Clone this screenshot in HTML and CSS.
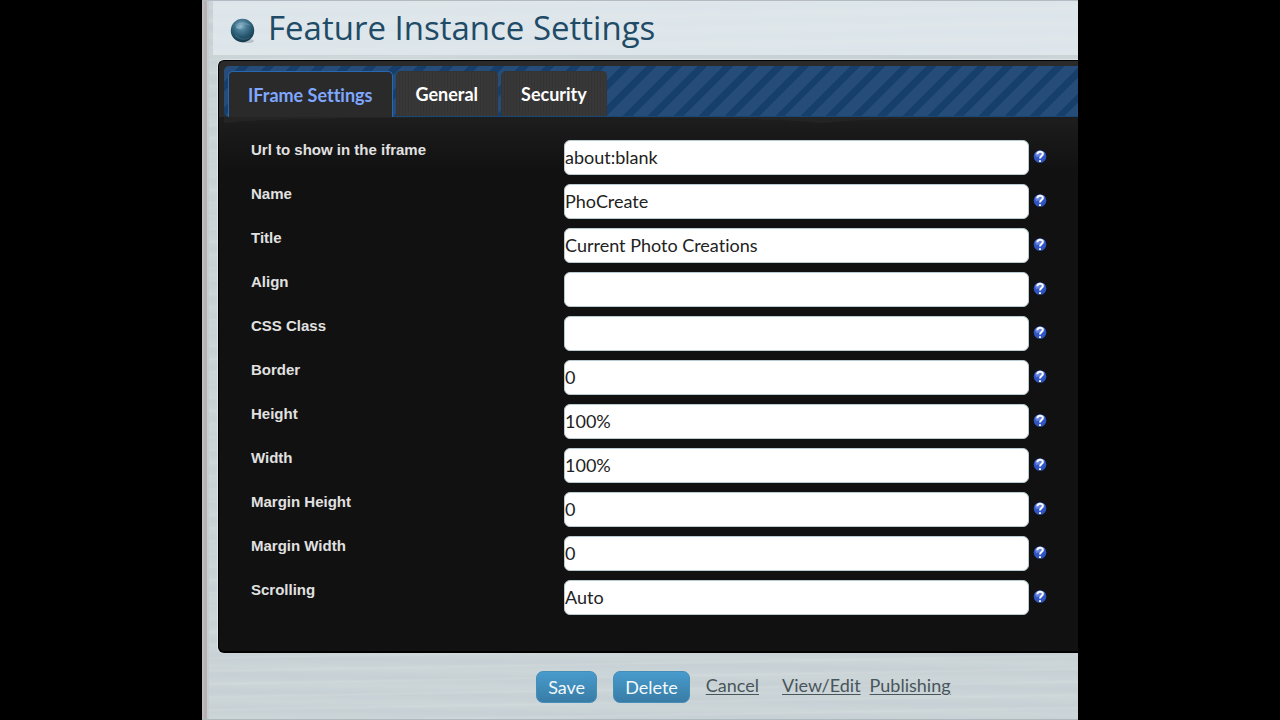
FILE: index.html
```html
<!DOCTYPE html>
<html lang="en">
<head>
<meta charset="utf-8">
<meta name="viewport" content="width=device-width, initial-scale=1">
<title>Feature Instance Settings</title>
<link rel="stylesheet" href="styles.css">
</head>
<body>
<main class="page">
  <header class="heading">
    <svg class="orb" viewBox="0 0 26 26" aria-hidden="true">
      <defs><radialGradient id="orb" cx=".45" cy=".3" r=".7"><stop offset="0" stop-color="#8ab5c9"/><stop offset=".3" stop-color="#4c7e99"/><stop offset=".65" stop-color="#285970"/><stop offset="1" stop-color="#10364b"/></radialGradient></defs>
      <ellipse cx="17" cy="23" rx="7" ry="2" fill="#b9c0c5"/>
      <circle cx="12.500" cy="12.500" r="11.700" fill="url(#orb)"/>
      <path d="M4 8C8 3 17 3 21 8C16 6 9 6 4 8Z" fill="#8eb4c7" opacity=".35"/>
      <ellipse cx="9" cy="9" rx="3" ry="2" fill="#9cc2d2" opacity=".5"/>
      <path d="M5 17C8 21 15 23 20 19" fill="none" stroke="#5c8ca5" stroke-width="1.500" opacity=".3"/>
    </svg>
    <h1 class="title">Feature Instance Settings</h1>
  </header>
  <form class="content">
    <section class="panel">
      <div class="tabs" role="tablist">
        <button class="tab tab-active" type="button" role="tab" aria-selected="true">IFrame Settings</button>
        <button class="tab" type="button" role="tab" aria-selected="false">General</button>
        <button class="tab" type="button" role="tab" aria-selected="false">Security</button>
      </div>
      <div class="fields" role="tabpanel">
        <div class="row"><label class="label" for="url">Url to show in the iframe</label><input class="input" id="url" type="text" value="about:blank"><a class="help" href="#url" aria-label="Help"><svg class="help-icon" viewBox="0 0 14 15"><use href="#q"/></svg></a></div>
        <div class="row"><label class="label" for="name">Name</label><input class="input" id="name" type="text" value="PhoCreate"><a class="help" href="#name" aria-label="Help"><svg class="help-icon" viewBox="0 0 14 15"><use href="#q"/></svg></a></div>
        <div class="row"><label class="label" for="title">Title</label><input class="input" id="title" type="text" value="Current Photo Creations"><a class="help" href="#title" aria-label="Help"><svg class="help-icon" viewBox="0 0 14 15"><use href="#q"/></svg></a></div>
        <div class="row"><label class="label" for="align">Align</label><input class="input" id="align" type="text"><a class="help" href="#align" aria-label="Help"><svg class="help-icon" viewBox="0 0 14 15"><use href="#q"/></svg></a></div>
        <div class="row"><label class="label" for="css">CSS Class</label><input class="input" id="css" type="text"><a class="help" href="#css" aria-label="Help"><svg class="help-icon" viewBox="0 0 14 15"><use href="#q"/></svg></a></div>
        <div class="row"><label class="label" for="border">Border</label><input class="input" id="border" type="text" value="0"><a class="help" href="#border" aria-label="Help"><svg class="help-icon" viewBox="0 0 14 15"><use href="#q"/></svg></a></div>
        <div class="row"><label class="label" for="height">Height</label><input class="input" id="height" type="text" value="100%"><a class="help" href="#height" aria-label="Help"><svg class="help-icon" viewBox="0 0 14 15"><use href="#q"/></svg></a></div>
        <div class="row"><label class="label" for="width">Width</label><input class="input" id="width" type="text" value="100%"><a class="help" href="#width" aria-label="Help"><svg class="help-icon" viewBox="0 0 14 15"><use href="#q"/></svg></a></div>
        <div class="row"><label class="label" for="mheight">Margin Height</label><input class="input" id="mheight" type="text" value="0"><a class="help" href="#mheight" aria-label="Help"><svg class="help-icon" viewBox="0 0 14 15"><use href="#q"/></svg></a></div>
        <div class="row"><label class="label" for="mwidth">Margin Width</label><input class="input" id="mwidth" type="text" value="0"><a class="help" href="#mwidth" aria-label="Help"><svg class="help-icon" viewBox="0 0 14 15"><use href="#q"/></svg></a></div>
        <div class="row"><label class="label" for="scrolling">Scrolling</label><input class="input" id="scrolling" type="text" value="Auto"><a class="help" href="#scrolling" aria-label="Help"><svg class="help-icon" viewBox="0 0 14 15"><use href="#q"/></svg></a></div>
      </div>
    </section>
    <div class="actions">
      <button class="button" type="button">Save</button>
      <button class="button" type="button">Delete</button>
      <nav class="links">
        <a class="link link-cancel" href="#cancel">Cancel</a>
        <a class="link" href="#view">View/Edit</a>
        <a class="link" href="#publishing">Publishing</a>
      </nav>
    </div>
  </form>
</main>
<svg class="symbols" aria-hidden="true">
  <symbol id="q" viewBox="0 0 14 15">
    <circle cx="7" cy="7.500" r="6.300" fill="#3154c5"/>
    <path d="M2 5A6 6 0 0 1 12 4L10 7L3 8Z" fill="#6383dc"/>
    <path d="M4.300 5.200C4.500 2 9.800 1.900 9.800 5C9.800 7 7 7 7 9.500M7 11.200V13" fill="none" stroke="#f7f9ff" stroke-width="2"/>
  </symbol>
</svg>
</body>
</html>
```
FILE: styles.css
```css
* { box-sizing: border-box; }

body {
  margin: 0;
  background: #000;
  font-family: Lato, "Open Sans", sans-serif;
}

.page {
  max-width: 876px;
  min-height: 100vh;
  margin: 0 auto;
  padding-left: 11px;
  border-top: 1px solid #b4bcc2;
  border-bottom: 1px solid #aeb9be;
  background:
    linear-gradient(90deg, #bdbcbe 0 2px, #b7b1b3 2px 5px, #c9cdd0 5px 7px, transparent 7px),
    repeating-linear-gradient(179deg, transparent 0 5px, rgba(255, 255, 255, .1) 7px, transparent 9px 13px),
    repeating-linear-gradient(181deg, #ccd5d8 0, #c7d0d4 8px, #ccd5d8 17px);
}

.heading {
  display: flex;
  align-items: center;
  gap: 12px;
  height: 54px;
  padding-left: 17px;
  background: repeating-linear-gradient(179deg, #dce5ea 0, #dfe7eb 7px, #dce5ea 15px);
}

.orb {
  flex: none;
  width: 26px;
  height: 26px;
  margin-top: 5px;
}

.title {
  margin: 0;
  color: #1f4b66;
  font: 400 33px/44px "Open Sans", "Noto Sans", sans-serif;
}

.content { padding: 5px 0 0 5px; }

.panel {
  padding: 5px 0 28px 5px;
  border: 1px solid #000;
  border-right: 0;
  border-bottom-width: 2px;
  border-radius: 6px 0 0 6px;
  background: linear-gradient(#2a2a2a 0 56px, #1d1d1d 56px, #111 110px);
  box-shadow: -1px 0 #dce5e7, 0 -1px #dce5e7;
}

.tabs {
  display: flex;
  gap: 3px;
  padding: 5px 0 0 4px;
  border-bottom: 1px solid #174775;
  border-radius: 5px 0 0 5px;
  background: repeating-linear-gradient(135deg, #264d7a 0 11px, #173f6c 11px 18px);
}

.tab {
  height: 45px;
  padding: 0 19px;
  border: 1px solid #343434;
  border-bottom: 0;
  border-radius: 5px 5px 0 0;
  background: repeating-linear-gradient(90deg, #383838 0 2px, #343434 2px 3px);
  color: #fff;
  font: 700 18px/44px Lato, sans-serif;
  font-variant-ligatures: none;
}

.tab-active {
  height: 46px;
  margin-bottom: -1px;
  border-color: #2868b2;
  background: #2a2a2a;
  color: #7fa7ff;
}

.fields {
  display: grid;
  gap: 9px;
  padding: 23px 25px 8px 27px;
  background: radial-gradient(ellipse 300px 6px at 50% 100%, #1d1d1d 96%, #242424 100%) 0 0 / 598px 6px repeat-x;
}

.row {
  display: grid;
  grid-template-columns: minmax(0, 313fr) minmax(0, 465fr) 24px;
}

.label {
  color: #e1e1e1;
  font: 700 15px/20px "Liberation Sans", Arial, sans-serif;
}

.input {
  width: 100%;
  height: 35px;
  padding: 0 0 1px;
  border: 1px solid #b8cbd0;
  border-radius: 6px;
  background: #fff;
  color: #222;
  font: 18px/24px Lato, sans-serif;
  font-variant-ligatures: none;
}

.help {
  width: 14px;
  height: 15px;
  margin: 9px 0 0 4px;
}

.help-icon {
  display: block;
  width: 14px;
  height: 15px;
}

.actions {
  display: flex;
  align-items: flex-start;
  gap: 16px;
  padding: 18px 0 0 37%;
}

.button {
  height: 32px;
  padding: 0 11px;
  border: 1px solid #448eb8;
  border-radius: 7px;
  background: linear-gradient(#489bcc, #397ca6);
  color: #f1f8fc;
  font: 18px/28px Lato, sans-serif;
}

.links { display: flex; gap: 9px; }

.link {
  color: #48555a;
  font: 18px/28px Lato, sans-serif;
  text-underline-offset: 2px;
}

.link-cancel { margin-right: 14px; }

.symbols { position: absolute; width: 0; height: 0; }
```
